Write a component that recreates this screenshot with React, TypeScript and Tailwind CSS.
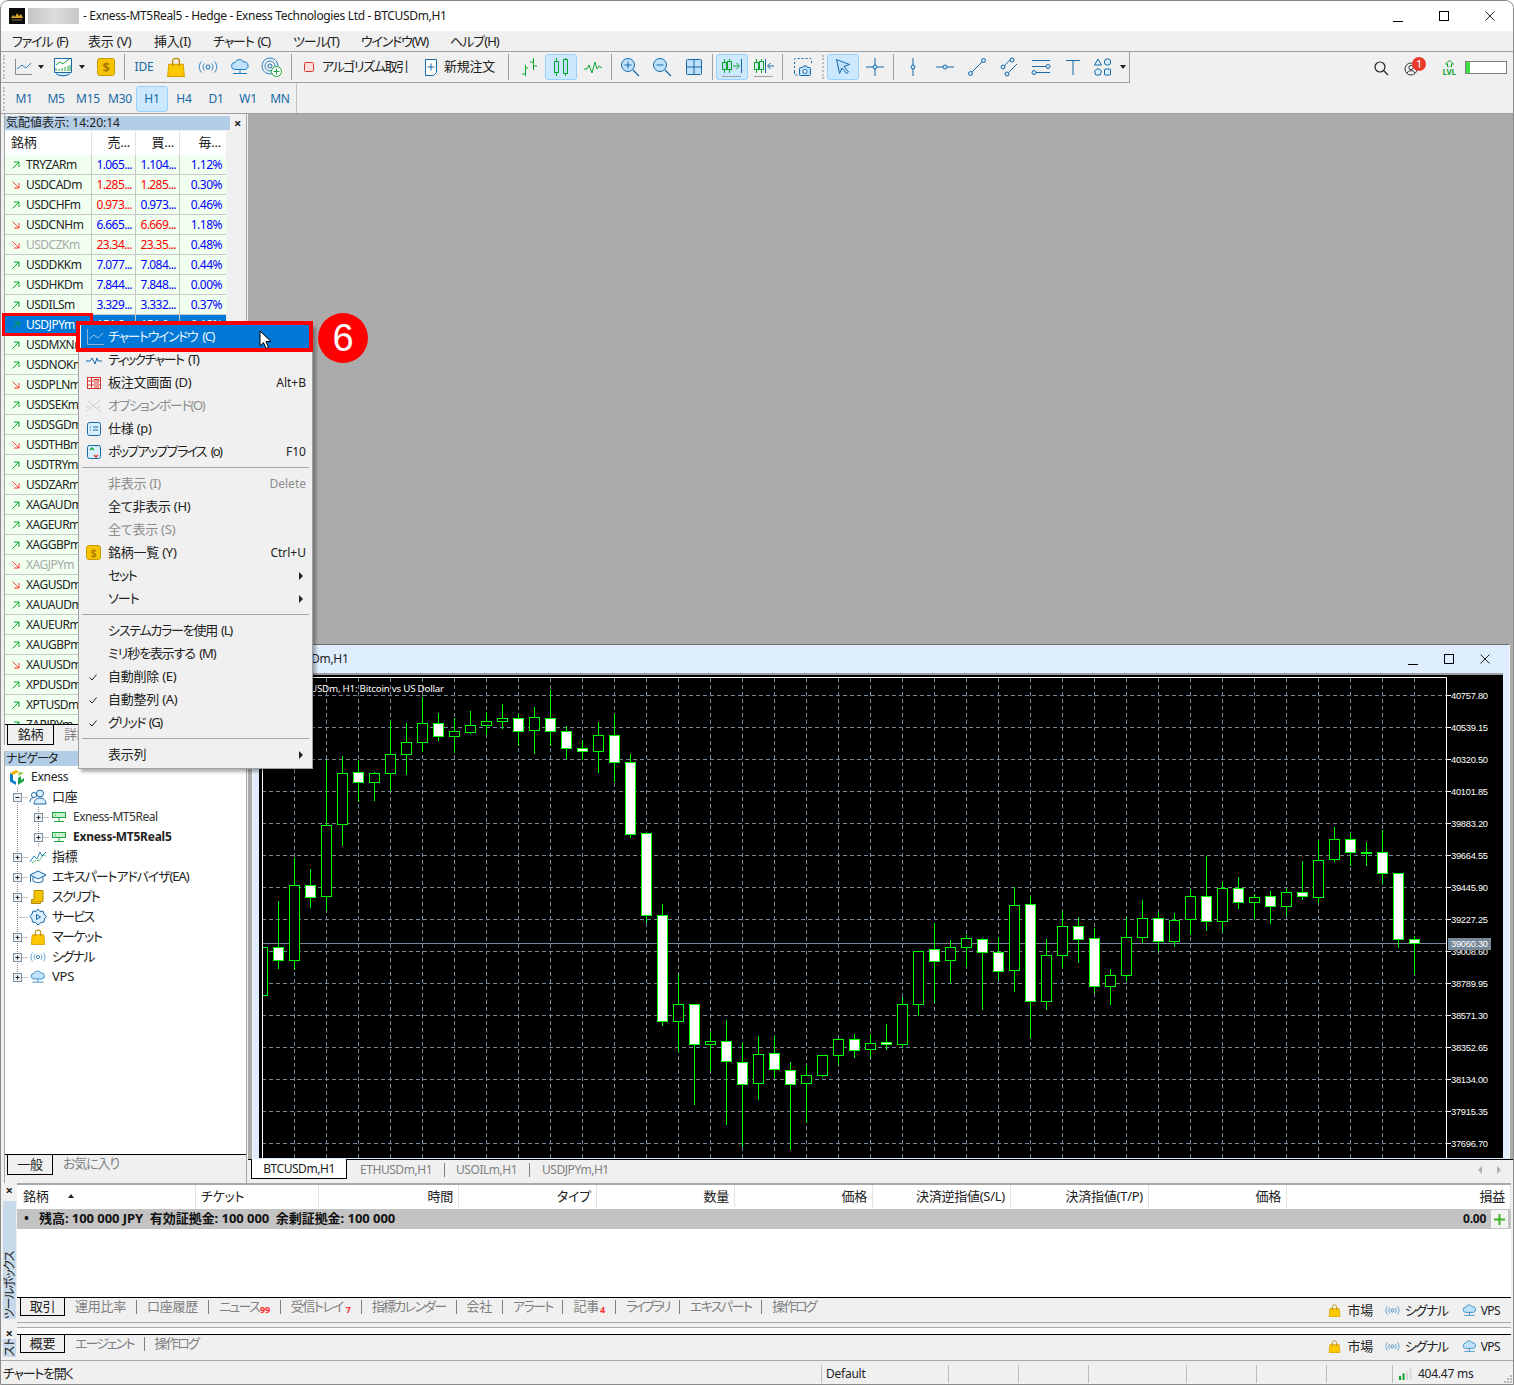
import React from "react";

const BL = "#1668a6";
const LB = "#bfe1fb";

type S = { className?: string };
const Svg = ({ w = 20, h = 20, children }: { w?: number; h?: number; children: React.ReactNode }) => (
  <svg width={w} height={h} viewBox={`0 0 ${w} ${h}`} fill="none" className="shrink-0 block">{children}</svg>
);

const ChartLine = ({ dim }: { dim?: boolean }) => (
  <Svg w={18} h={18}>
    <path d="M1.5 1v15.5H18" stroke={dim ? "#8fb0cc" : "#8a8a8a"} />
    <path d="M3 11l5-4 4 3 5-5" stroke={dim ? "#9cc3e6" : "#2f86c7"} />
  </Svg>
);
const Sheet = () => (
  <Svg w={22} h={22}>
    <path d="M2.5 2.5h17v14h-17z" stroke={BL} fill="#fff" />
    <path d="M4 17.5c3 3 11 3 14 0" stroke={BL} fill={LB} />
    <path d="M4 15v-3M7 15v-2M10 15v-3M13 15v-4M16 15v-5M18 15v-6" stroke="#1ca53c" />
    <path d="M4 9l4-3 3 2 6-5" stroke="#1ca53c" />
  </Svg>
);
const Dollar = ({ s = 18 }: { s?: number }) => (
  <span className="flex items-center justify-center rounded-[3px] bg-[#f6c400] border border-[#c99a00] text-[#a97800] font-bold" style={{ width: s, height: s, fontSize: s - 5, lineHeight: 1 }}>$</span>
);
const Bag = ({ s = 18 }: { s?: number }) => (
  <svg width={s} height={s} viewBox="0 0 18 18" fill="none" className="shrink-0 block">
    <path d="M2.5 6.5h13l1 11h-15z" fill="#fbc800" stroke="#d89e00" />
    <path d="M6 8V3.5C6 .5 12 .5 12 3.5V8" stroke="#b98a00" strokeWidth="1.2" />
  </svg>
);
const Signal = ({ s = 20 }: { s?: number }) => (
  <svg width={s} height={s} viewBox="0 0 20 20" fill="none" className="shrink-0 block">
    <circle cx="10" cy="10" r="2" stroke={BL} />
    <path d="M6.5 6.5c-2 2-2 5 0 7M13.5 6.5c2 2 2 5 0 7M3.5 4.5c-3 3-3 8 0 11M16.5 4.5c3 3 3 8 0 11" stroke="#2f86c7" />
  </svg>
);
const Cloud = ({ s = 20 }: { s?: number }) => (
  <svg width={s} height={s} viewBox="0 0 20 20" fill="none" className="shrink-0 block">
    <path d="M5 12.5a3.5 3.5 0 0 1 0-7c1-3.500 7-4 8.500-.5a3.600 3.600 0 0 1 1.500 7.500z" fill={LB} stroke="#1f7fc0" />
    <path d="M10 12.500v4M3 16.500h14" stroke="#1f7fc0" />
  </svg>
);
const SignalAdd = () => (
  <Svg w={22} h={22}>
    <circle cx="9" cy="10" r="2" stroke={BL} />
    <circle cx="9" cy="10" r="5" stroke="#2f86c7" />
    <circle cx="9" cy="10" r="8" stroke="#2f86c7" />
    <circle cx="15.500" cy="15.500" r="5" fill="#fff" stroke="#14a83c" />
    <path d="M15.500 12.500v6M12.500 15.500h6" stroke="#14a83c" />
  </Svg>
);
const Algo = () => (
  <Svg w={14} h={14}>
    <rect x="2.500" y="2.500" width="9" height="9" rx="1" fill="#fde0dc" stroke="#e2342a" />
  </Svg>
);
const NewOrder = () => (
  <Svg w={16} h={20}>
    <path d="M2.500 2.500h11v13l-3 3h-8z" fill="#fff" stroke={BL} />
    <path d="M8 6.500v7M4.500 10h7" stroke={BL} />
  </Svg>
);
const G = "#0aa52d";
const Bars = () => (
  <Svg w={20} h={20}>
    <path d="M6.500 8v11M3 17h3.500M6.500 11H9M14.500 1v12M11 5h3.500M14.500 9H18" stroke={G} />
  </Svg>
);
const Candles = () => (
  <Svg w={20} h={20}>
    <path d="M5.500 1v18M14.500 1v18" stroke={G} />
    <rect x="3.500" y="4.500" width="4" height="11" fill={LB} stroke={G} />
    <rect x="12.500" y="2.500" width="4" height="14" fill={LB} stroke={G} />
  </Svg>
);
const LineCh = () => (
  <Svg w={20} h={20}>
    <path d="M1 12h3l2-4 3 8 3-11 2 7 2-3 3 2" stroke={G} />
  </Svg>
);
const Mag = ({ kind }: { kind: "+" | "-" }) => (
  <Svg w={20} h={20}>
    <circle cx="8" cy="8" r="6.500" fill={LB} stroke={BL} />
    <path d="M13 13l6 6" stroke={BL} strokeWidth="1.300" />
    <path d={kind === "+" ? "M4.500 8h7M8 4.500v7" : "M4.500 8h7"} stroke={BL} />
  </Svg>
);
const GridI = () => (
  <Svg w={18} h={18}>
    <rect x="1.500" y="1.500" width="15" height="15" rx="1" fill={LB} stroke={BL} />
    <path d="M9 1.500v15M1.500 9h15" stroke={BL} />
  </Svg>
);
const AutoScroll = () => (
  <Svg w={22} h={22}>
    <path d="M3.500 3v14M8.500 3v14" stroke={G} />
    <rect x="1.500" y="6.500" width="4" height="7" fill={LB} stroke={G} />
    <rect x="6.500" y="5.500" width="4" height="8" fill={LB} stroke={G} />
    <path d="M12 10h6M15.500 7l3 3-3 3" stroke={G} />
    <path d="M20.500 3v14" stroke={BL} />
    <path d="M1 20.500h19" stroke="#a0a0a0" />
  </Svg>
);
const ChartShift = () => (
  <Svg w={22} h={22}>
    <path d="M3.500 3v14M8.500 3v14" stroke={G} />
    <rect x="1.500" y="6.500" width="4" height="7" fill="#d9efff" stroke={G} />
    <rect x="6.500" y="5.500" width="4" height="8" fill="#d9efff" stroke={G} />
    <path d="M12.500 3v14" stroke={BL} />
    <path d="M21 10h-6M17.500 7l-3 3 3 3" stroke={BL} />
    <path d="M1 20.500h19" stroke="#a0a0a0" />
  </Svg>
);
const Camera = () => (
  <Svg w={20} h={22}>
    <path d="M1.500 16V3.500a1 1 0 0 1 1-1h15a1 1 0 0 1 1 1V8M1.500 16v3h3" stroke={BL} strokeDasharray="2 2" />
    <path d="M7.500 11.500h2l1-1.500h3l1 1.500h2a1 1 0 0 1 1 1v6a1 1 0 0 1-1 1h-9a1 1 0 0 1-1-1v-6a1 1 0 0 1 1-1z" fill={LB} stroke={BL} />
    <circle cx="12" cy="15.500" r="2" stroke={BL} fill="#fff" />
  </Svg>
);
const Cur = () => (
  <Svg w={20} h={20}>
    <path d="M3.500 2.500l13 5-5.500 2 4.500 5.500-2 1.500-4.500-5.500-2.500 5.500z" fill={LB} stroke={BL} />
  </Svg>
);
const Cross = () => (
  <Svg w={20} h={20}>
    <path d="M10 1v18M1 10h18" stroke={BL} />
    <circle cx="10" cy="10" r="2" fill="#cfe8fb" stroke={BL} />
  </Svg>
);
const VLine = () => (
  <Svg w={20} h={20}>
    <path d="M10 1v18" stroke={BL} />
    <circle cx="10" cy="10" r="2" fill="#cfe8fb" stroke={BL} />
  </Svg>
);
const HLine = () => (
  <Svg w={20} h={20}>
    <path d="M1 10h18" stroke={BL} />
    <circle cx="10" cy="10" r="2" fill="#cfe8fb" stroke={BL} />
  </Svg>
);
const Trend = () => (
  <Svg w={20} h={20}>
    <path d="M4 16L16 4" stroke={BL} />
    <circle cx="3.500" cy="16.500" r="2" fill="#cfe8fb" stroke={BL} />
    <circle cx="16.500" cy="3.500" r="2" fill="#cfe8fb" stroke={BL} />
  </Svg>
);
const Channel = () => (
  <Svg w={20} h={20}>
    <path d="M3 11L12 2M8 17L18 7" stroke={BL} />
    <circle cx="4" cy="10" r="2" fill="#cfe8fb" stroke={BL} />
    <circle cx="13" cy="3" r="2" fill="#cfe8fb" stroke={BL} />
    <circle cx="8" cy="17" r="2" fill="#cfe8fb" stroke={BL} />
  </Svg>
);
const Fib = () => (
  <Svg w={20} h={20}>
    <path d="M1 3.500h18M1 9.500h14M5 15.500h14" stroke={BL} />
    <circle cx="17" cy="9.500" r="2" fill="#cfe8fb" stroke={BL} />
    <circle cx="3" cy="15.500" r="2" fill="#cfe8fb" stroke={BL} />
  </Svg>
);
const TextI = () => (
  <Svg w={20} h={20}>
    <path d="M3 3.500h14M10 3.500V18" stroke={BL} />
  </Svg>
);
const Shapes = () => (
  <Svg w={20} h={20}>
    <path d="M5 2l3.500 6h-7z" fill="#d9efff" stroke={BL} />
    <circle cx="14.500" cy="5" r="3.200" fill="#d9efff" stroke={BL} />
    <path d="M5 11.500l3.500 2.500-1.300 4H2.800l-1.300-4z" fill="#d9efff" stroke={BL} />
    <rect x="11.500" y="12" width="6" height="6" rx="1" fill="#d9efff" stroke={BL} />
  </Svg>
);
const Arrow = () => <span className="block w-0 h-0 border-x-[3.5px] border-x-transparent border-t-[4px] border-t-[#222] mx-auto" />;
const Sep = () => (
  <div className="w-[5px] h-[26px] flex justify-center">
    <div className="w-[1px] h-full bg-[#a0a0a0]" />
  </div>
);
const Grip = ({ className }: S) => (
  <div className={`flex justify-center ${className ?? ""}`}>
    <div className="w-[2px] h-[24px] border-l-2 border-dotted border-[#bdbdbd]" />
  </div>
);
const Btn = ({ active, className, children }: { active?: boolean; className?: string; children: React.ReactNode }) => (
  <div className={`flex items-center justify-center h-[26px] rounded-[3px] ${active ? "bg-[#cce8ff] border border-[#99d1ff]" : ""} ${className ?? "w-[32px]"}`}>{children}</div>
);

const Toolbar = () => (
  <div className="flex h-[31px] shrink-0">
    <div className="flex items-center w-[1130px] border-b border-r border-[#a0a0a0]">
      <Grip className="w-[8px]" />
      <Btn className="w-[30px]"><ChartLine /></Btn>
      <div className="w-[6px]"><Arrow /></div>
      <div className="w-[8px]" />
      <Btn className="w-[22px]"><Sheet /></Btn>
      <div className="w-[5px]" />
      <div className="w-[6px]"><Arrow /></div>
      <div className="w-[10px]" />
      <Btn className="w-[22px]"><Dollar s={18} /></Btn>
      <div className="w-[6px]" />
      <div className="w-[2px] h-[26px] flex justify-center"><div className="w-[1px] h-full bg-[#a0a0a0]" /></div>
      <div className="w-[3px]" />
      <Btn><span className="text-[12px] text-[#1668a6]">IDE</span></Btn>
      <Btn><Bag s={20} /></Btn>
      <Btn><Signal s={20} /></Btn>
      <Btn><Cloud s={20} /></Btn>
      <Btn><SignalAdd /></Btn>
      <div className="w-[1px]" />
      <Sep />
      <div className="w-[6px]" />
      <Btn className="w-[18px]"><Algo /></Btn>
      <div className="w-[4px]" />
      <span className="w-[89px] text-[13px] whitespace-nowrap text-[#222] tracking-[-1.4px]">アルゴリズム取引</span>
      <div className="w-[12px]" />
      <Btn className="w-[16px]"><NewOrder /></Btn>
      <div className="w-[5px]" />
      <span className="w-[53px] text-[13px] whitespace-nowrap text-[#222]">新規注文</span>
      <div className="w-[9px]" />
      <Sep />
      <div className="w-[2px]" />
      <Btn><Bars /></Btn>
      <Btn active><Candles /></Btn>
      <Btn><LineCh /></Btn>
      <Sep />
      <Btn><Mag kind="+" /></Btn>
      <Btn><Mag kind="-" /></Btn>
      <Btn><GridI /></Btn>
      <Sep />
      <div className="w-[1px]" />
      <Btn active><AutoScroll /></Btn>
      <Btn><ChartShift /></Btn>
      <Sep />
      <div className="w-[2px]" />
      <Btn><Camera /></Btn>
      <Grip className="w-[8px]" />
      <Btn active><Cur /></Btn>
      <Btn><Cross /></Btn>
      <Sep />
      <div className="w-[1px]" />
      <Btn><VLine /></Btn>
      <Btn><HLine /></Btn>
      <Btn><Trend /></Btn>
      <Btn><Channel /></Btn>
      <Btn><Fib /></Btn>
      <Btn><TextI /></Btn>
      <Btn className="w-[28px]"><Shapes /></Btn>
      <div className="w-[3px]" />
      <div className="w-[6px]"><Arrow /></div>
    </div>
    <div className="flex-1 flex items-center justify-end pr-[7px]">
      <Svg w={16} h={16}>
        <circle cx="7" cy="7" r="5" stroke="#222" strokeWidth="1.200" />
        <path d="M11 11l4 4" stroke="#222" strokeWidth="1.300" />
      </Svg>
      <div className="w-[15px]" />
      <div className="relative w-[20px] h-[20px]">
        <svg width="14" height="14" viewBox="0 0 14 14" fill="none" className="absolute left-0 top-[4px]">
          <circle cx="7" cy="7" r="6" stroke="#333" />
          <circle cx="7" cy="5.500" r="2.200" stroke="#333" />
          <path d="M3 11c1-3 7-3 8 0" stroke="#333" />
        </svg>
        <span className="absolute left-[8px] top-[-1px] w-[14px] h-[14px] rounded-full bg-[#e8392b] text-white text-[11px] leading-[14px] text-center">1</span>
      </div>
      <div className="w-[18px]" />
      <div className="flex flex-col items-center w-[14px] text-[#0aa52d]">
        <svg width="9" height="7" viewBox="0 0 9 7" fill="none" className="block"><path d="M4.500 .5L8.500 4H6.500v3h-4V4H.5z" stroke="#0aa52d" /></svg>
        <span className="text-[8px] leading-[9px] font-bold">LVL</span>
      </div>
      <div className="w-[42px] h-[13px] border border-[#808080] bg-white ml-[9px] flex">
        <div className="w-[4px] bg-[#3de040]" />
      </div>
    </div>
  </div>
);

const TF = () => (
  <div className="flex h-[30px] shrink-0">
    <div className="flex items-center w-[297px] border-r border-[#c4c4c4] pt-[1px]">
      <Grip className="w-[8px]" />
      {["M1", "M5", "M15", "M30", "H1", "H4", "D1", "W1", "MN"].map((t) => (
        <Btn key={t} active={t === "H1"}><span className="text-[12px] text-[#1668a6]">{t}</span></Btn>
      ))}
    </div>
  </div>
);

const Ar = ({ up }: { up: boolean }) => (
  <svg width="10" height="10" viewBox="0 0 10 10" fill="none" className="shrink-0 block">
    {up ? <path d="M1.500 8.500l6.500-6.500M3 2h5v5" stroke="#0aa52d" /> : <path d="M1.500 1.500L8 8M3 8h5V3" stroke="#ff3b30" />}
  </svg>
);

type MW = { s: string; up: boolean; b?: string; a?: string; p?: string; bc?: string; ac?: string; dim?: boolean; sel?: boolean };
const blue = "text-[#0000ff]";
const red = "text-[#ff0000]";
const mw: MW[] = [
  { s: "TRYZARm", up: true, b: "1.065...", a: "1.104...", p: "1.12%", bc: blue, ac: blue },
  { s: "USDCADm", up: false, b: "1.285...", a: "1.285...", p: "0.30%", bc: red, ac: red },
  { s: "USDCHFm", up: true, b: "0.973...", a: "0.973...", p: "0.46%", bc: red, ac: blue },
  { s: "USDCNHm", up: false, b: "6.665...", a: "6.669...", p: "1.18%", bc: blue, ac: red },
  { s: "USDCZKm", up: false, b: "23.34...", a: "23.35...", p: "0.48%", bc: red, ac: red, dim: true },
  { s: "USDDKKm", up: true, b: "7.077...", a: "7.084...", p: "0.44%", bc: blue, ac: blue },
  { s: "USDHKDm", up: true, b: "7.844...", a: "7.848...", p: "0.00%", bc: blue, ac: blue },
  { s: "USDILSm", up: true, b: "3.329...", a: "3.332...", p: "0.37%", bc: blue, ac: blue },
  { s: "USDJPYm", up: true, b: "151.8...", a: "151.9...", p: "0.18%", sel: true },
  { s: "USDMXNm", up: true }, { s: "USDNOKm", up: true }, { s: "USDPLNm", up: false }, { s: "USDSEKm", up: true },
  { s: "USDSGDm", up: true }, { s: "USDTHBm", up: false }, { s: "USDTRYm", up: true }, { s: "USDZARm", up: false },
  { s: "XAGAUDm", up: true }, { s: "XAGEURm", up: true }, { s: "XAGGBPm", up: true }, { s: "XAGJPYm", up: false, dim: true },
  { s: "XAGUSDm", up: false }, { s: "XAUAUDm", up: true }, { s: "XAUEURm", up: true }, { s: "XAUGBPm", up: true },
  { s: "XAUUSDm", up: false }, { s: "XPDUSDm", up: true }, { s: "XPTUSDm", up: true }, { s: "ZARJPYm", up: true },
];

const MarketWatch = () => (
  <div className="ml-[4px] w-[243px] border-x border-[#a8a8a8] flex flex-col h-[631px] pt-[2px]">
    <div className="flex items-center h-[14px]">
      <div className="w-[225px] h-full bg-[#b4cde6] pl-[1px] text-[12px] leading-[14px] whitespace-nowrap text-[#222] tracking-[0px]">気配値表示: 14:20:14</div>
      <span className="ml-[4px] text-[13px] leading-[14px] font-bold">×</span>
    </div>
    <div className="h-[595px] mt-[1px] overflow-hidden w-[221px] text-[12px]">
      <div className="flex h-[24px] bg-white text-[13px] text-[#222] leading-[22px]">
        <span className="w-[87px] pl-[6px] border-r border-[#e4e4e4]">銘柄</span>
        <span className="w-[44px] text-right pr-[5px] border-r border-[#e4e4e4]">売...</span>
        <span className="w-[44px] text-right pr-[5px] border-r border-[#e4e4e4]">買...</span>
        <span className="w-[46px] text-right pr-[5px]">毎...</span>
      </div>
      {mw.map((r) => (
        <div key={r.s} className={`flex h-[20px] leading-[19px] border-b ${r.sel ? "bg-[#0078d7] text-white border-[#0078d7]" : "bg-[#f0fff0] border-[#c9c9c9]"}`}>
          <span className={`w-[87px] flex items-center pl-[6px] gap-[5px] border-r border-[#c9c9c9] whitespace-nowrap tracking-[-0.5px] ${r.sel ? "" : r.dim ? "text-[#a8a8a8]" : "text-[#222]"}`}>
            <Ar up={r.up} />{r.s}
          </span>
          <span className={`w-[44px] text-right pr-[3px] border-r border-[#c9c9c9] whitespace-nowrap tracking-[-0.6px] ${r.sel ? "" : r.bc ?? ""}`}>{r.b}</span>
          <span className={`w-[44px] text-right pr-[3px] border-r border-[#c9c9c9] whitespace-nowrap tracking-[-0.6px] ${r.sel ? "" : r.ac ?? ""}`}>{r.a}</span>
          <span className={`w-[46px] text-right pr-[4px] whitespace-nowrap tracking-[-0.5px] ${r.sel ? "" : blue}`}>{r.p}</span>
        </div>
      ))}
    </div>
    <div className="flex h-[21px] border-t border-black -mt-[1px]">
      <span className="ml-[2px] w-[47px] h-[20px] border-x border-b border-black bg-[#f0f0f0] text-[13px] text-center leading-[18px]">銘柄</span>
      <span className="ml-[10px] text-[13px] leading-[18px] text-[#808080]">詳細</span>
    </div>
  </div>
);

const Tree = ({ level, plus, minus, last }: { level: number; plus?: boolean; minus?: boolean; last?: boolean }) => {
  const w = level === 1 ? 24 : 45;
  const bx = level === 1 ? 12.5 : 33.5;
  const has = plus || minus;
  return (
    <svg width={w} height="20" viewBox={`0 0 ${w} 20`} fill="none" className="shrink-0 block">
      <path d={`M12.500 0V${last ? 10 : 20}`} stroke="#8a8a8a" strokeDasharray="1 1" />
      {level === 2 && <path d="M33.500 0V20" stroke="#8a8a8a" strokeDasharray="1 1" />}
      <path d={`M${bx} 10.500H${w - 1}`} stroke="#8a8a8a" strokeDasharray="1 1" />
      {has && (
        <>
          <rect x={bx - 4} y="6.500" width="8" height="8" fill="#eef3f8" stroke="#7f8ea0" />
          <path d={`M${bx - 2} 10.500H${bx + 2}`} stroke="#222" />
          {plus && <path d={`M${bx} 8.500V12.500`} stroke="#222" />}
        </>
      )}
    </svg>
  );
};

const Users = () => (
  <Svg w={18} h={18}>
    <circle cx="11" cy="5.500" r="3.500" fill="#d9efff" stroke={BL} />
    <path d="M5 16c0-8 12-8 12 0z" fill="#d9efff" stroke={BL} />
    <circle cx="5" cy="7" r="2.500" stroke={BL} />
    <path d="M1 14c0-3 1.500-4 3-4" stroke={BL} />
  </Svg>
);
const Server = () => (
  <Svg w={16} h={16}>
    <rect x="1.500" y="3.500" width="13" height="5" fill="#c8f0cc" stroke="#1ca53c" />
    <path d="M8 8.500v4M3 12.500h10M4 6h1" stroke="#1ca53c" />
  </Svg>
);
const Wave = () => (
  <Svg w={18} h={18}>
    <path d="M1 14l4-6 3 3 3-7 2 4 4-4" stroke="#2f86c7" />
    <path d="M3 15l4-3 3 1 4-6 3 1" stroke="#1ca53c" strokeDasharray="2 1" />
  </Svg>
);
const Cap = () => (
  <Svg w={18} h={18}>
    <path d="M1 7l8-4 8 4-8 4z" fill="#d9efff" stroke={BL} />
    <path d="M4 9v4c2 2 8 2 10 0V9M1.500 8v6" stroke={BL} />
  </Svg>
);
const Scroll = () => (
  <Svg w={18} h={18}>
    <path d="M5 2.500h9v11H2.500v-2H5z" fill="#f5c400" stroke="#b98a00" />
    <path d="M2.500 13.500v2h9v-2" fill="#f5c400" stroke="#b98a00" />
  </Svg>
);
const Gear = () => (
  <Svg w={18} h={18}>
    <path d="M9 1l2 2.500 3-.5 1 3 2.500 2.500-2 2.500-.5 3-3 .5L9 17l-2.500-2.500-3-.5-.5-3L1 8.500 3 6l1-3 3 .5z" fill="#d9efff" stroke={BL} />
    <path d="M7.500 6.500l4 2.500-4 2.500z" stroke={BL} />
  </Svg>
);
const ExLogo = () => (
  <Svg w={16} h={16}>
    <path d="M1 4l6-3 3 2-6 3z" fill="#f2b705" />
    <path d="M1 4l3 2v5l3 2v3l-6-3.500z" fill="#0a7cc4" />
    <path d="M10 3l5 1-6 3z" fill="#8cc63f" />
    <path d="M15 4v8l-6 4V9l3-2v4l3-2z" fill="#19a14a" />
  </Svg>
);

const TreeRow = ({ level, plus, minus, last, icon, bold, label, t }: { level: number; plus?: boolean; minus?: boolean; last?: boolean; icon: React.ReactNode; bold?: boolean; label: string; t?: string }) => (
  <div className="flex items-center h-[20px] whitespace-nowrap">
    <Tree level={level} plus={plus} minus={minus} last={last} />
    <div className="w-[18px] flex justify-center shrink-0">{icon}</div>
    <span className={`ml-[5px] ${t ?? ""} ${bold ? "font-bold text-[12px]" : level === 2 ? "text-[12px] text-[#333]" : "text-[13px] text-[#222]"}`}>{label}</span>
  </div>
);

const Navigator = () => (
  <div className="ml-[4px] w-[243px] border-x border-[#a8a8a8] flex-1 flex flex-col mt-[6px] min-h-0">
    <div className="w-[225px] h-[15px] bg-[#b4cde6] pl-[1px] text-[12px] leading-[15px] text-[#222] tracking-[-1px]">ナビゲータ</div>
    <div className="flex-1 bg-white pt-[1px] min-h-0">
      <div className="flex items-center h-[20px] pl-[4px] gap-[6px]">
        <ExLogo />
        <span className="text-[12px] text-[#222]">Exness</span>
      </div>
      <TreeRow level={1} minus icon={<Users />} label="口座" />
      <TreeRow level={2} plus icon={<Server />} t="tracking-[-0.45px]" label="Exness-MT5Real" />
      <TreeRow level={2} plus icon={<Server />} bold label="Exness-MT5Real5" />
      <TreeRow level={1} plus icon={<Wave />} label="指標" />
      <TreeRow level={1} plus icon={<Cap />} t="tracking-[-1.1px]" label="エキスパートアドバイザ(EA)" />
      <TreeRow level={1} plus icon={<Scroll />} t="tracking-[-1.8px]" label="スクリプト" />
      <TreeRow level={1} icon={<Gear />} t="tracking-[-1.9px]" label="サービス" />
      <TreeRow level={1} plus icon={<Bag s={16} />} t="tracking-[-1.5px]" label="マーケット" />
      <TreeRow level={1} plus icon={<Signal s={16} />} t="tracking-[-1.6px]" label="シグナル" />
      <TreeRow level={1} plus last icon={<Cloud s={16} />} label="VPS" />
    </div>
    <div className="flex h-[21px] border-t border-black">
      <span className="ml-[2px] w-[46px] h-[20px] border-x border-b border-black bg-[#f0f0f0] text-[13px] text-center leading-[19px]">一般</span>
      <span className="ml-[10px] text-[13px] leading-[17px] text-[#808080] tracking-[-1.2px]">お気に入り</span>
    </div>
    <div className="h-[8px] bg-[#f0f0f0]" />
  </div>
);

const candlesData: number[][] = ([
  [0, 7, 700, 800, 946, 960, 0],
  [0, 55, 660, 802, 841, 863, 1], [0, 103, 532, 616, 841, 866, 0], [0, 151, 565, 616, 652, 680, 1], [0, 199, 238, 436, 649, 686, 0],
  [0, 247, 226, 280, 433, 494, 0], [0, 295, 238, 277, 307, 362, 1], [0, 343, 274, 280, 307, 359, 0], [0, 391, 121, 223, 280, 329, 0],
  [0, 439, 127, 187, 223, 281, 0], [0, 487, 49, 130, 187, 212, 0], [0, 535, 97, 130, 169, 180, 1], [0, 583, 112, 154, 169, 215, 0],
  [0, 631, 91, 136, 157, 160, 0], [0, 679, 94, 124, 136, 161, 0], [0, 727, 70, 115, 124, 143, 0], [0, 775, 100, 115, 154, 196, 1],
  [0, 823, 79, 112, 151, 218, 0], [0, 871, 28, 115, 154, 196, 1], [0, 919, 136, 154, 205, 233, 1], [0, 967, 178, 205, 214, 238, 1],
  [0, 1015, 124, 166, 214, 275, 0], [0, 1063, 100, 166, 247, 304, 1], [0, 1111, 220, 247, 463, 470, 1], [0, 1159, 458, 460, 706, 725, 1],
  [1, 7, 670, 706, 1024, 1034, 1], [1, 55, 880, 973, 1024, 1114, 0], [1, 103, 970, 973, 1093, 1271, 1], [1, 151, 1054, 1084, 1093, 1169, 0],
  [1, 199, 1018, 1084, 1144, 1331, 1], [1, 247, 1087, 1147, 1213, 1397, 1], [1, 295, 1066, 1123, 1210, 1256, 0], [1, 343, 1066, 1120, 1168, 1190, 1],
  [1, 391, 1144, 1171, 1213, 1406, 1], [1, 439, 1151, 1186, 1210, 1325, 0], [1, 487, 1122, 1126, 1186, 1189, 0], [1, 535, 1072, 1078, 1126, 1151, 0],
  [1, 583, 1060, 1078, 1111, 1130, 1], [1, 631, 1060, 1090, 1108, 1132, 0], [1, 679, 1030, 1087, 1093, 1108, 1], [1, 727, 949, 973, 1093, 1097, 0],
  [1, 775, 814, 814, 973, 1005, 0], [1, 823, 727, 808, 844, 965, 1], [1, 871, 778, 802, 841, 905, 0], [1, 919, 763, 775, 802, 857, 0],
  [1, 967, 772, 778, 817, 986, 1], [1, 1015, 767, 817, 874, 896, 1], [1, 1063, 619, 676, 871, 932, 0], [1, 1111, 644, 673, 964, 1072, 1],
  [1, 1159, 775, 826, 964, 986, 0],
  [2, 37, 691, 739, 826, 860, 0], [2, 85, 709, 739, 778, 845, 1], [2, 133, 742, 775, 919, 935, 1], [2, 181, 865, 886, 919, 971, 0],
  [2, 229, 709, 772, 886, 899, 0], [2, 277, 658, 715, 772, 785, 0], [2, 325, 694, 715, 784, 809, 1], [2, 373, 697, 721, 784, 797, 0],
  [2, 421, 628, 649, 718, 761, 0], [2, 469, 526, 649, 724, 749, 1], [2, 517, 604, 625, 724, 754, 0], [2, 565, 589, 625, 667, 683, 1],
  [2, 613, 640, 652, 667, 715, 0], [2, 661, 631, 649, 679, 728, 1], [2, 709, 625, 637, 679, 706, 0], [2, 757, 541, 637, 649, 656, 1],
  [2, 805, 478, 541, 652, 665, 0], [2, 853, 439, 478, 538, 542, 0], [2, 901, 457, 478, 517, 556, 1], [2, 949, 484, 517, 520, 556, 1],
  [2, 997, 448, 517, 580, 608, 1], [2, 1045, 580, 580, 778, 800, 1], [2, 1093, 766, 778, 790, 880, 1],
]).map((c) => {
  const ox = [260, 660, 1050][c[0]];
  const px = (v: number) => Math.round(v / 3 + 680) + 0.5;
  return [Math.floor(c[1] / 3 + ox) + 0.5, px(c[2]), px(c[3]), px(c[4]), px(c[5]), c[6]];
});

const prices = ["40757.80", "40539.15", "40320.50", "40101.85", "39883.20", "39664.55", "39445.90", "39227.25", "39008.60", "38789.95", "38571.30", "38352.65", "38134.00", "37915.35", "37696.70"];
const GRID = "#778899";

const Chart = () => {
  const vx: number[] = [];
  for (let x = 294.5; x < 1446; x += 32) vx.push(x);
  return (
    <svg width="1244" height="483" viewBox="259 675 1244 483" className="block shrink-0" shapeRendering="crispEdges" fill="none">
      <rect x="259" y="675" width="1244" height="483" fill="#000" />
      {prices.map((_, i) => (
        <path key={i} d={`M262 ${695.5 + 32 * i}H1446`} stroke={GRID} strokeDasharray="4 3" />
      ))}
      {vx.map((x) => (
        <path key={x} d={`M${x} 678V1158`} stroke={GRID} strokeDasharray="4 3" />
      ))}
      <path d="M262 943.500H1446" stroke={GRID} />
      {candlesData.map(([x, wt, bt, bb, wb, white], i) => (
        <g key={i}>
          <path d={`M${x} ${wt}V${wb}`} stroke="#00ff00" />
          <rect x={x - 5} y={bt} width="10" height={bb - bt} fill={white ? "#fff" : "#000"} stroke="#00ff00" />
        </g>
      ))}
      <rect x="259" y="677" width="3" height="481" fill="#000" />
      <path d="M262.500 1158V677.500H1446.500V1158" stroke="#fff" fill="none" />
      {prices.map((p, i) => (
        <g key={p}>
          <path d={`M1446 ${695.5 + 32 * i}h5`} stroke="#fff" />
          <text x="1451" y={698.8 + 32 * i} fill="#fff" fontFamily="'Liberation Sans',sans-serif" fontSize="9.300" shapeRendering="auto">{p}</text>
        </g>
      ))}
      <rect x="1448" y="938" width="43" height="12" fill={GRID} />
      <text x="1451" y="947" fill="#fff" fontFamily="'Liberation Sans',sans-serif" fontSize="9.300" shapeRendering="auto">39060.30</text>
      <text x="293" y="692" fill="#fff" fontFamily="'Noto Sans',sans-serif" fontSize="9.800" shapeRendering="auto">BTCUSDm, H1:  Bitcoin vs US Dollar</text>
    </svg>
  );
};

const WinCtl = ({ gap }: { gap: string }) => (
  <div className={`flex items-center ${gap}`}>
    <svg width="12" height="12" viewBox="0 0 12 12" fill="none" className="block"><path d="M1 11.500h10" stroke="#000" /></svg>
    <svg width="12" height="12" viewBox="0 0 12 12" fill="none" className="block"><rect x="1.500" y="1.500" width="9" height="9" stroke="#000" /></svg>
    <svg width="12" height="12" viewBox="0 0 12 12" fill="none" className="block"><path d="M1.500 1.500l9 9M10.500 1.500l-9 9" stroke="#222" /></svg>
  </div>
);

const RightCol = () => (
  <div className="flex-1 min-w-0 flex flex-col">
    <div className="flex-1 bg-[#ababab] min-h-0 flex flex-col justify-end pl-[4px] pr-[4px]">
      <div className="h-[515px] flex flex-col bg-[#deeeff] border-t border-[#6e6e6e] border-x border-x-[#f5f5f5]">
        <div className="h-[28px] flex items-center pl-[22px] pr-[18px] justify-between shrink-0">
          <span className="text-[12px] text-[#222]">BTCUSDm,H1</span>
          <WinCtl gap="gap-[24px]" />
        </div>
        <div className="h-[2px] bg-[#a0a0a0] ml-[6px] mr-[6px] shrink-0" />
        <div className="flex-1 pl-[6px] min-h-0 overflow-hidden">
          <Chart />
        </div>
      </div>
    </div>
    <div className="h-[24px] shrink-0 flex items-start pl-[3px] border-t border-black bg-[#f0f0f0] text-[12px] text-[#808080] relative tracking-[-0.45px]">
      <span className="w-[96px] h-[20px] -mt-[1px] border-x border-b border-black bg-white text-[#222] text-center leading-[20px]">BTCUSDm,H1</span>
      <span className="ml-[13px] w-[72px] whitespace-nowrap leading-[20px]">ETHUSDm,H1</span>
      <span className="ml-[12px] w-[1px] h-[14px] mt-[3px] bg-[#808080]" />
      <span className="ml-[11px] w-[61px] whitespace-nowrap leading-[20px]">USOILm,H1</span>
      <span className="ml-[12px] w-[1px] h-[14px] mt-[3px] bg-[#808080]" />
      <span className="ml-[12px] leading-[20px]">USDJPYm,H1</span>
      <div className="ml-auto flex gap-[15px] mt-[6px] pr-[13px]">
        <span className="w-0 h-0 border-y-[4px] border-y-transparent border-r-[4px] border-r-[#b0b0b0]" />
        <span className="w-0 h-0 border-y-[4px] border-y-transparent border-l-[4px] border-l-[#b0b0b0]" />
      </div>
    </div>
  </div>
);

const cols: [string, string, string][] = [
  ["銘柄", "w-[179px]", "sym"],
  ["チケット", "w-[123px]", "l"],
  ["時間", "w-[140px]", "r"],
  ["タイプ", "w-[138px]", "r"],
  ["数量", "w-[138px]", "r"],
  ["価格", "w-[138px]", "r"],
  ["決済逆指値(S/L)", "w-[138px]", "r"],
  ["決済指値(T/P)", "w-[138px]", "r"],
  ["価格", "w-[138px]", "r"],
  ["損益", "flex-1", "r"],
];

const Side = () => (
  <div className="flex items-center text-[13px] text-[#222] whitespace-nowrap pr-[11px]">
    <Bag s={13} />
    <span className="ml-[6px]">市場</span>
    <span className="ml-[12px]"><Signal s={15} /></span>
    <span className="ml-[5px] tracking-[-1.4px]">シグナル</span>
    <span className="ml-[14px]"><Cloud s={15} /></span>
    <span className="ml-[4px] text-[12px] tracking-[-0.6px]">VPS</span>
  </div>
);

const TBS = () => <span className="w-[1px] h-[14px] bg-[#808080] mx-[10px] shrink-0" />;
const Sup = ({ children, gap }: { children: React.ReactNode; gap?: string }) => <span className={`text-[#ff2a2a] text-[9px] font-bold self-end leading-[12px] ${gap ?? "ml-[1px]"}`}>{children}</span>;

const Toolbox = () => (
  <div className="h-[140px] shrink-0 flex">
    <div className="w-[17px] flex flex-col items-center pl-[1px]">
      <span className="text-[13px] font-bold leading-[14px]">×</span>
      <div className="flex-1 mt-[4px] w-[13px] bg-[#c8d9ea] flex items-end justify-center">
        <span className="[writing-mode:vertical-rl] [text-orientation:sideways] rotate-180 text-[12px] leading-[13px] whitespace-nowrap text-[#222] tracking-[-1.3px]">ツールボックス</span>
      </div>
      <div className="h-[4px]" />
    </div>
    <div className="flex-1 min-w-0 flex flex-col mr-[3px]">
      <div className="h-[2px] bg-[#a8a8a8]" />
      <div className="flex h-[24px] bg-white text-[13px] text-[#222] leading-[22px] shrink-0">
        {cols.map(([t, w, k], i) => (
          <div key={i} className={`${w} h-full pb-[2px] border-r border-[#e4e4e4] px-[5px] whitespace-nowrap flex items-center ${k === "r" ? "justify-end" : ""} ${k === "sym" ? "pl-[6px]" : ""}`}>
            {t}
            {k === "sym" && <span className="ml-[19px] w-0 h-0 border-x-[3.5px] border-x-transparent border-b-[4px] border-b-[#222]" />}
          </div>
        ))}
      </div>
      <div className="h-[20px] bg-[#c3c3c3] flex items-center pl-[7px] font-bold text-[13px] whitespace-nowrap text-[#111] shrink-0 tracking-[-0.05px]">
        <span className="w-[15px]">•</span>
        <span>残高: 100 000 JPY&nbsp; 有効証拠金: 100 000&nbsp; 余剰証拠金: 100 000</span>
        <span className="ml-auto text-[12px] tracking-[-0.25px]">0.00</span>
        <span className="ml-[5px] w-[17px] h-[18px] mr-[3px] bg-[#f3f3f3] flex items-center justify-center">
          <svg width="11" height="11" viewBox="0 0 11 11" fill="none" className="block"><path d="M5.500 0v11M0 5.500h11" stroke="#3fb128" strokeWidth="2" /></svg>
        </span>
      </div>
      <div className="flex-1 bg-white min-h-0" />
      <div className="h-[25px] shrink-0 border-t border-black flex items-start text-[13px] text-[#808080] whitespace-nowrap pl-[3px]">
        <span className="w-[45px] h-[19px] border-x border-b border-black text-center text-[#222] leading-[18px] -mt-[1px]">取引</span>
        <div className="flex items-center h-[18px] ml-[10px]">
          <span>運用比率</span><TBS />
          <span>口座履歴</span><TBS />
          <span className="tracking-[-1.7px]">ニュース</span><Sup>99</Sup><TBS />
          <span className="tracking-[-1.4px]">受信トレイ</span><Sup gap="ml-[3px]">7</Sup><TBS />
          <span className="tracking-[-1.7px]">指標カレンダー</span><TBS />
          <span>会社</span><TBS />
          <span className="tracking-[-1.7px]">アラート</span><TBS />
          <span>記事</span><Sup>4</Sup><TBS />
          <span className="tracking-[-2.6px]">ライブラリ</span><TBS />
          <span className="tracking-[-1.6px]">エキスパート</span><TBS />
          <span className="tracking-[-1.7px]">操作ログ</span>
        </div>
        <div className="ml-auto mt-[3px]"><Side /></div>
      </div>
      <div className="h-[1px] bg-[#a8a8a8]" />
    </div>
  </div>
);

const Tester = () => (
  <div className="h-[33px] mt-[4px] shrink-0 flex">
    <div className="w-[17px] flex flex-col items-center pl-[1px]">
      <span className="text-[13px] font-bold leading-[12px]">×</span>
      <div className="flex-1 w-[13px] bg-[#c8d9ea] flex items-end justify-center overflow-hidden">
        <span className="[writing-mode:vertical-rl] [text-orientation:sideways] rotate-180 text-[12px] leading-[13px] whitespace-nowrap text-[#222]">スト</span>
      </div>
      <div className="h-[3px]" />
    </div>
    <div className="flex-1 min-w-0 flex flex-col mr-[3px]">
      <div className="h-[7px] bg-white border-t border-[#a8a8a8]" />
      <div className="flex-1 border-t border-black flex items-start text-[13px] text-[#808080] whitespace-nowrap pl-[3px]">
        <span className="w-[45px] h-[19px] border-x border-b border-black text-center text-[#222] leading-[18px] -mt-[1px]">概要</span>
        <div className="flex items-center h-[18px] ml-[10px]">
          <span className="tracking-[-1.9px]">エージェント</span><TBS />
          <span className="tracking-[-1.7px]">操作ログ</span>
        </div>
        <div className="ml-auto mt-[2px]"><Side /></div>
      </div>
    </div>
  </div>
);

const StatusBar = () => (
  <div className="h-[25px] shrink-0 border-t border-[#a8a8a8] flex items-center text-[12px] text-[#222] whitespace-nowrap relative pt-[1px]">
    <span className="w-[821px] pl-[3px] text-[13px] tracking-[-1.3px]">チャートを開く</span>
    <span className="w-[127px] h-[18px] border-l border-[#bdbdbd] pl-[4px] leading-[18px]">Default</span>
    <span className="w-[70px] h-[18px] border-l border-[#bdbdbd]" />
    <span className="w-[70px] h-[18px] border-l border-[#bdbdbd]" />
    <span className="w-[98px] h-[18px] border-l border-[#bdbdbd]" />
    <span className="w-[70px] h-[18px] border-l border-[#bdbdbd]" />
    <span className="w-[70px] h-[18px] border-l border-[#bdbdbd]" />
    <span className="w-[66px] h-[18px] border-l border-[#bdbdbd]" />
    <span className="w-[100px] h-[18px] border-l border-[#bdbdbd] flex items-center pl-[5px] gap-[5px]">
      <svg width="15" height="12" viewBox="0 0 15 12" fill="none" className="block shrink-0">
        <path d="M1 8h2v4H1z" fill="#0aa52d" /><path d="M4.500 5.500h2V12h-2z" fill="#0aa52d" />
        <path d="M8 3.500h2V12H8zM11.500 0.500h2V12h-2z" fill="#d8d8d8" />
      </svg>
      <span>404.47 ms</span>
    </span>
    <svg width="10" height="10" viewBox="0 0 10 10" fill="#b8b8b8" className="absolute right-[1px] bottom-[1px]">
      <path d="M7 1h2v2H7zM4 4h2v2H4zM7 4h2v2H7zM1 7h2v2H1zM4 7h2v2H4zM7 7h2v2H7z" />
    </svg>
  </div>
);

type MI = { l: string; k?: string; d?: boolean; ic?: React.ReactNode; ck?: boolean; ar?: boolean; hi?: boolean; sep?: boolean; t?: string };
const MIc = ({ c, children }: { c: string; children: React.ReactNode }) => (
  <svg width="16" height="16" viewBox="0 0 16 16" fill="none" className="block" stroke={c}>{children}</svg>
);
const menu: MI[] = [
  { l: "チャートウインドウ (C)", hi: true, t: "tracking-[-1.4px] [word-spacing:3px]", ic: <ChartLine dim /> },
  { l: "ティックチャート (T)", t: "tracking-[-1.6px] [word-spacing:3px]", ic: <MIc c={BL}><path d="M0 9h4l2-3 3 6 2-6 1 3h4" /></MIc> },
  { l: "板注文画面 (D)", k: "Alt+B", ic: <MIc c="#d8322a"><rect x="1.500" y="2.500" width="13" height="11" fill="#fff" /><path d="M1.500 6h13M1.500 10h13M5.500 2.500v11M8 4.500h5M8 8h5M8 12h5" /></MIc> },
  { l: "オプションボード(O)", d: true, t: "tracking-[-1.3px]", ic: <MIc c="#bdbdbd"><path d="M1 13L14 2M2 3l13 11M1 9h3M12 9h3" strokeDasharray="2 1" /></MIc> },
  { l: "仕様 (p)", ic: <MIc c={BL}><rect x="1.500" y="1.500" width="13" height="13" rx="2" fill="#d9efff" /><path d="M4 6h1M7 6h5M4 9h1M7 9h5" /></MIc> },
  { l: "ポップアッププライス (o)", k: "F10", t: "tracking-[-1.7px] [word-spacing:3px]", ic: <MIc c={BL}><rect x="1.500" y="1.500" width="13" height="13" rx="2" fill="#d9efff" /><path d="M4 6l2-2 2 2" stroke="#1ca53c" strokeWidth="1.500" /><path d="M8 11l2 2 2-2" stroke="#e2342a" strokeWidth="1.500" /></MIc> },
  { l: "", sep: true },
  { l: "非表示 (I)", k: "Delete", d: true },
  { l: "全て非表示 (H)" },
  { l: "全て表示 (S)", d: true },
  { l: "銘柄一覧 (Y)", k: "Ctrl+U", ic: <Dollar s={15} /> },
  { l: "セット", ar: true, t: "tracking-[-1.5px]" },
  { l: "ソート", ar: true, t: "tracking-[-0.9px]" },
  { l: "", sep: true },
  { l: "システムカラーを使用 (L)", t: "tracking-[-1.25px] [word-spacing:2px]" },
  { l: "ミリ秒を表示する (M)", t: "tracking-[-1.1px] [word-spacing:2px]" },
  { l: "自動削除 (E)", ck: true },
  { l: "自動整列 (A)", ck: true },
  { l: "グリッド (G)", ck: true, t: "tracking-[-1.5px] [word-spacing:2px]" },
  { l: "", sep: true },
  { l: "表示列", ar: true },
];

const ContextMenu = () => (
  <div className="absolute left-[78px] top-[324px] w-[235px] h-[445px] bg-[#f0f0f0] border-r border-b border-l border-[#a0a0a0] shadow-[3px_3px_3px_rgba(0,0,0,0.3)] pt-[1px] px-[2px] text-[13px]">
    {menu.map((m, i) =>
      m.sep ? (
        <div key={i} className="h-[9px] flex items-center px-[1px]"><div className="w-full h-[1px] bg-[#a8a8a8]" /></div>
      ) : (
        <div key={i} className={`h-[23px] flex items-center whitespace-nowrap ${m.hi ? "bg-[#0078d7] text-white" : m.d ? "text-[#8c8c8c]" : "text-[#222]"}`}>
          <div className="w-[27px] flex items-center shrink-0 pl-[5px]">
            {m.ck ? (
              <svg width="10" height="10" viewBox="0 0 10 10" fill="none" className="block ml-[2px]"><path d="M1.500 5.500l2.500 2.500L8.500 2.500" stroke="#222" /></svg>
            ) : m.ic}
          </div>
          <span className={`${m.hi ? "text-[#e8f2fb]" : ""} ${m.t ?? ""}`}>{m.l}</span>
          {m.k && <span className="ml-auto pr-[4px] text-[12px] tracking-[0px]">{m.k}</span>}
          {m.ar && <span className="ml-auto mr-[7px] w-0 h-0 border-y-[4px] border-y-transparent border-l-[4px] border-l-[#222]" />}
        </div>
      ),
    )}
  </div>
);

export default function App() {
  return (
    <div className="relative w-[1514px] h-[1385px] overflow-hidden rounded-t-[8px] bg-[#f0f0f0] flex flex-col font-['Noto_Sans','Noto_Sans_CJK_JP',sans-serif] [font-feature-settings:'palt'] tracking-[-0.25px] text-[#222]">
      <div className="h-[31px] bg-white shrink-0 flex items-center pl-[9px] pr-[18px]">
        <svg width="16" height="16" viewBox="0 0 16 16" className="block shrink-0">
          <rect width="16" height="16" fill="#0c0c0c" />
          <path d="M2 10l2-3 2 2 2-4 2 3 2-2 2 4z" fill="#d9a520" />
          <path d="M3 12h10" stroke="#8a7a3a" />
        </svg>
        <div className="w-[51px] h-[16px] ml-[3px] bg-gradient-to-r from-[#c4c4c4] via-[#dcdcdc] to-[#c8c8c8]" />
        <span className="ml-[4px] text-[12px] whitespace-nowrap text-[#1a1a1a] tracking-[-0.34px]">- Exness-MT5Real5 - Hedge - Exness Technologies Ltd - BTCUSDm,H1</span>
        <div className="ml-auto"><WinCtl gap="gap-[34px]" /></div>
      </div>
      <div className="h-[21px] shrink-0 border-b border-[#a0a0a0] flex items-center text-[13px] leading-[20px] whitespace-nowrap pl-[12px] text-[#222]">
        <span className="w-[76px] tracking-[-1.2px] [word-spacing:2px]">ファイル (F)</span>
        <span className="w-[66px]">表示 (V)</span>
        <span className="w-[59px]">挿入(I)</span>
        <span className="w-[80px] tracking-[-1.2px] [word-spacing:2px]">チャート (C)</span>
        <span className="w-[68px] tracking-[-1px]">ツール(T)</span>
        <span className="w-[89px] tracking-[-1.2px]">ウインドウ(W)</span>
        <span className="tracking-[-1px]">ヘルプ(H)</span>
      </div>
      <Toolbar />
      <TF />
      <div className="h-[1070px] shrink-0 flex border-t border-[#a0a0a0]">
        <div className="w-[248px] shrink-0 flex flex-col">
          <MarketWatch />
          <Navigator />
        </div>
        <RightCol />
      </div>
      <Toolbox />
      <Tester />
      <StatusBar />

      <div className="absolute left-[2px] top-[313px] w-[91px] h-[23px] border-[3px] border-[#ff0000]" />
      <ContextMenu />
      <div className="absolute left-[76px] top-[321px] w-[237px] h-[31px] border-[4px] border-[#ff0000]" />
      <div className="absolute left-[318px] top-[313px] w-[50px] h-[50px] rounded-full bg-[#ff0000] text-white text-[38px] leading-[50px] text-center font-['Liberation_Sans',sans-serif]">6</div>
      <svg width="14" height="20" viewBox="0 0 14 20" className="absolute left-[259px] top-[330px]">
        <path d="M1 1v15l3.500-3.500 2.500 6 2.500-1-2.500-6h5z" fill="#fff" stroke="#000" />
      </svg>
      <div className="absolute inset-0 rounded-t-[8px] border border-[#8a8a8a] pointer-events-none" />
    </div>
  );
}
